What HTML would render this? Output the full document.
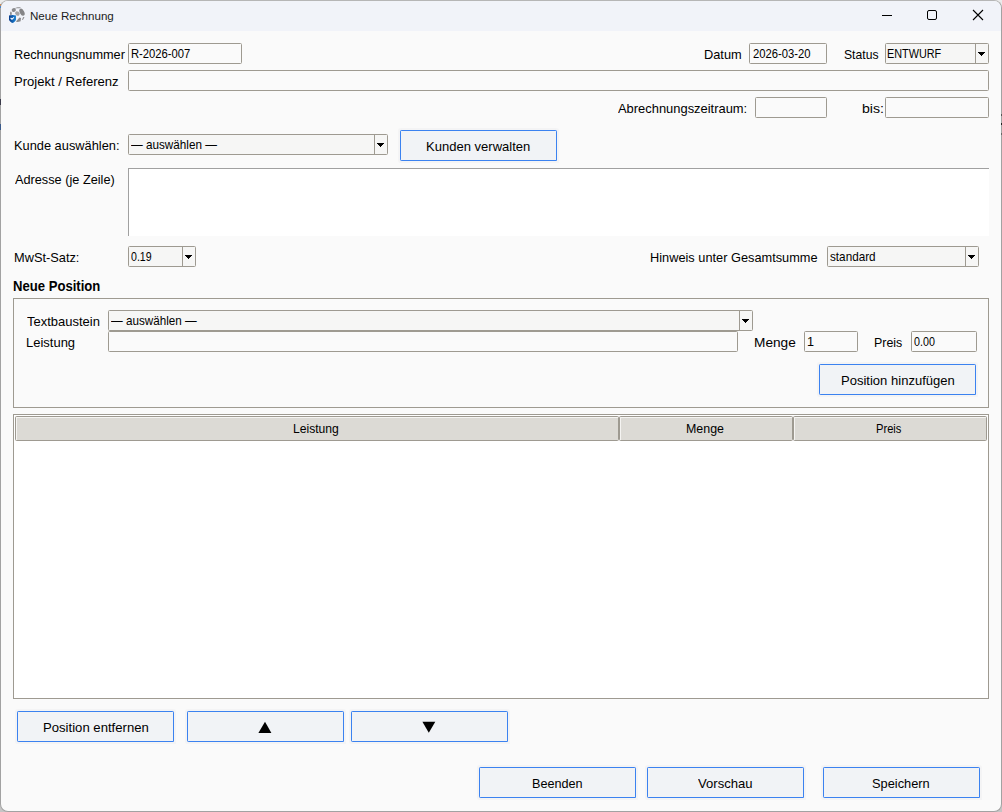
<!DOCTYPE html>
<html><head><meta charset="utf-8"><style>
html,body{margin:0;padding:0;width:1002px;height:812px;overflow:hidden;background:linear-gradient(#ebebeb 0,#ebebeb 50%,#c5c5c5 50%,#c5c5c5 100%);}
*{box-sizing:border-box}
.win{position:absolute;left:0;top:0;width:1002px;height:812px;border:1px solid #a2a2a2;border-top-color:#b6b6b6;border-radius:8px;background:#fafafa;overflow:hidden}
.tb{position:absolute;left:0;top:0;width:1000px;height:30px;background:#f1f3f9}
.win div,.win svg{position:absolute}
#root{position:absolute;left:-1px;top:-1px;width:1002px;height:812px}
#root>div,#root>svg{position:absolute}
.t{font-family:"Liberation Sans",sans-serif;white-space:nowrap;line-height:16px;margin-top:-12px;transform-origin:0 0}
.ent{border:1px solid #9e9a91;border-radius:1.5px;background:#fafafa}
.cmb{border:1px solid #9e9a91;border-radius:1.5px;background:#f6f6f5}
.cmb .dd{position:absolute;right:0;top:0;width:13px;height:100%;border-left:1px solid #9e9a91}
.cmb .dd svg{position:absolute;left:2px;top:8px}
.btn{border:1px solid #3b82f0;border-radius:1.2px 1.2px 0 1.2px;background:#f1f3f6;box-shadow:0 0 0 2px #f4f4f5}
.ta{border-top:1px solid #a0a0a0;border-left:1px solid #a0a0a0;background:#fff}
.lf{border:1px solid #9e9a91;border-radius:0}
.tv{border:1px solid #9e9a91;border-radius:0;background:#fff}
.th{border:1px solid #9e9a91;border-radius:1.5px;background:#dcdad5;box-shadow:inset 1px 1px 0 #f5f4f2}
.ico{position:absolute}
</style></head><body>
<div class="win"><div class="tb"></div>
<div id="root">
<div class="ent" style="left:128px;top:43px;width:114px;height:21px"></div>
<div class="ent" style="left:749px;top:43px;width:78px;height:21px"></div>
<div class="ent" style="left:128px;top:70px;width:861px;height:21px"></div>
<div class="ent" style="left:755px;top:97px;width:72px;height:21px"></div>
<div class="ent" style="left:885px;top:97px;width:104px;height:21px"></div>
<div class="ent" style="left:108px;top:331px;width:630px;height:21px"></div>
<div class="ent" style="left:804px;top:331px;width:54px;height:21px"></div>
<div class="ent" style="left:911px;top:331px;width:66px;height:21px"></div>
<div class="cmb" style="left:885px;top:43px;width:104px;height:21px"><div class="dd"><svg width="7" height="4" viewBox="0 0 7 4" shape-rendering="crispEdges"><rect x="0" y="0" width="7" height="1"/><rect x="1" y="1" width="5" height="1"/><rect x="2" y="2" width="3" height="1"/><rect x="3" y="3" width="1" height="1"/></svg></div></div>
<div class="cmb" style="left:128px;top:134px;width:260px;height:21px"><div class="dd"><svg width="7" height="4" viewBox="0 0 7 4" shape-rendering="crispEdges"><rect x="0" y="0" width="7" height="1"/><rect x="1" y="1" width="5" height="1"/><rect x="2" y="2" width="3" height="1"/><rect x="3" y="3" width="1" height="1"/></svg></div></div>
<div class="cmb" style="left:128px;top:246px;width:68px;height:21px"><div class="dd"><svg width="7" height="4" viewBox="0 0 7 4" shape-rendering="crispEdges"><rect x="0" y="0" width="7" height="1"/><rect x="1" y="1" width="5" height="1"/><rect x="2" y="2" width="3" height="1"/><rect x="3" y="3" width="1" height="1"/></svg></div></div>
<div class="cmb" style="left:827px;top:246px;width:152px;height:21px"><div class="dd"><svg width="7" height="4" viewBox="0 0 7 4" shape-rendering="crispEdges"><rect x="0" y="0" width="7" height="1"/><rect x="1" y="1" width="5" height="1"/><rect x="2" y="2" width="3" height="1"/><rect x="3" y="3" width="1" height="1"/></svg></div></div>
<div class="cmb" style="left:108px;top:310px;width:645px;height:21px"><div class="dd"><svg width="7" height="4" viewBox="0 0 7 4" shape-rendering="crispEdges"><rect x="0" y="0" width="7" height="1"/><rect x="1" y="1" width="5" height="1"/><rect x="2" y="2" width="3" height="1"/><rect x="3" y="3" width="1" height="1"/></svg></div></div>
<div class="btn" style="left:400px;top:130px;width:157px;height:31px"></div>
<div class="btn" style="left:819px;top:364px;width:157px;height:31px"></div>
<div class="btn" style="left:17px;top:711px;width:157px;height:31px"></div>
<div class="btn" style="left:187px;top:711px;width:157px;height:31px"></div>
<div class="btn" style="left:351px;top:711px;width:157px;height:31px"></div>
<div class="btn" style="left:479px;top:767px;width:157px;height:31px"></div>
<div class="btn" style="left:647px;top:767px;width:157px;height:31px"></div>
<div class="btn" style="left:823px;top:767px;width:157px;height:31px"></div>
<div class="ta" style="left:128px;top:168px;width:861px;height:68px"></div>
<div class="lf" style="left:13px;top:298px;width:976px;height:110px"></div>
<div class="tv" style="left:13px;top:414px;width:976px;height:285px"></div>
<div class="th" style="left:15px;top:416px;width:604px;height:25px"></div>
<div class="th" style="left:619px;top:416px;width:174px;height:25px"></div>
<div class="th" style="left:793px;top:416px;width:194px;height:25px"></div>
<svg class="ico" style="left:258px;top:721px" width="14" height="13" viewBox="0 0 14 13"><path d="M0.4 12 L7 0.7 L13.4 12 Z" fill="#000"/></svg>
<svg class="ico" style="left:422px;top:721px" width="14" height="13" viewBox="0 0 14 13"><path d="M0.4 0.8 L13.3 0.8 L6.8 11.8 Z" fill="#000"/></svg>
<div class="t" id="title" style="left:30.10px;top:19.80px;font-size:11.6px;font-weight:400;color:#1b1b1b;transform:scaleX(1.0001)">Neue Rechnung</div>
<div class="t" id="l_rn" style="left:14.10px;top:59.00px;font-size:12.6px;font-weight:400;color:#000;transform:scaleX(1.0092)">Rechnungsnummer</div>
<div class="t" id="v_rn" style="left:131.10px;top:58.00px;font-size:12.6px;font-weight:400;color:#000;transform:scaleX(0.8923)">R-2026-007</div>
<div class="t" id="l_dat" style="left:704.16px;top:59.00px;font-size:12.6px;font-weight:400;color:#000;transform:scaleX(1.0169)">Datum</div>
<div class="t" id="v_dat" style="left:752.50px;top:58.00px;font-size:12.6px;font-weight:400;color:#000;transform:scaleX(0.8938)">2026-03-20</div>
<div class="t" id="l_st" style="left:843.60px;top:59.00px;font-size:12.6px;font-weight:400;color:#000;transform:scaleX(0.9660)">Status</div>
<div class="t" id="v_st" style="left:887.14px;top:58.00px;font-size:12.6px;font-weight:400;color:#000;transform:scaleX(0.8614)">ENTWURF</div>
<div class="t" id="l_pr" style="left:14.10px;top:86.00px;font-size:12.6px;font-weight:400;color:#000;transform:scaleX(1.0384)">Projekt / Referenz</div>
<div class="t" id="l_ab" style="left:618.02px;top:112.70px;font-size:12.6px;font-weight:400;color:#000;transform:scaleX(1.0254)">Abrechnungszeitraum:</div>
<div class="t" id="l_bis" style="left:862.12px;top:112.70px;font-size:12.6px;font-weight:400;color:#000;transform:scaleX(1.1235)">bis:</div>
<div class="t" id="l_ku" style="left:14.10px;top:149.50px;font-size:12.6px;font-weight:400;color:#000;transform:scaleX(1.0177)">Kunde auswählen:</div>
<div class="t" id="v_ku" style="left:130.52px;top:148.70px;font-size:12.6px;font-weight:400;color:#000;transform:scaleX(0.9300)">— auswählen —</div>
<div class="t" id="b_kv" style="left:426.10px;top:150.80px;font-size:12.6px;font-weight:400;color:#000;transform:scaleX(1.0344)">Kunden verwalten</div>
<div class="t" id="l_ad" style="left:15.00px;top:184.30px;font-size:12.6px;font-weight:400;color:#000;transform:scaleX(1.0102)">Adresse (je Zeile)</div>
<div class="t" id="l_mw" style="left:14.10px;top:262.00px;font-size:12.6px;font-weight:400;color:#000;transform:scaleX(1.0159)">MwSt-Satz:</div>
<div class="t" id="v_mw" style="left:131.02px;top:261.20px;font-size:12.6px;font-weight:400;color:#000;transform:scaleX(0.8400)">0.19</div>
<div class="t" id="l_hw" style="left:650.16px;top:262.00px;font-size:12.6px;font-weight:400;color:#000;transform:scaleX(1.0146)">Hinweis unter Gesamtsumme</div>
<div class="t" id="v_hw" style="left:830.00px;top:261.20px;font-size:12.6px;font-weight:400;color:#000;transform:scaleX(0.9308)">standard</div>
<div class="t" id="l_np" style="left:13.08px;top:290.10px;font-size:14.3px;font-weight:700;color:#000;transform:scaleX(0.9161)">Neue Position</div>
<div class="t" id="l_tb" style="left:27.02px;top:326.00px;font-size:12.6px;font-weight:400;color:#000;transform:scaleX(1.0311)">Textbaustein</div>
<div class="t" id="v_tb" style="left:111.02px;top:324.50px;font-size:12.6px;font-weight:400;color:#000;transform:scaleX(0.9269)">— auswählen —</div>
<div class="t" id="l_le" style="left:26.12px;top:347.00px;font-size:12.6px;font-weight:400;color:#000;transform:scaleX(1.0306)">Leistung</div>
<div class="t" id="l_me" style="left:754.12px;top:347.00px;font-size:12.6px;font-weight:400;color:#000;transform:scaleX(1.0846)">Menge</div>
<div class="t" id="v_me" style="left:807.10px;top:346.00px;font-size:12.6px;font-weight:400;color:#000;transform:scaleX(1.0000)">1</div>
<div class="t" id="l_pe" style="left:874.14px;top:346.60px;font-size:12.6px;font-weight:400;color:#000;transform:scaleX(0.9862)">Preis</div>
<div class="t" id="v_pe" style="left:914.46px;top:346.00px;font-size:12.6px;font-weight:400;color:#000;transform:scaleX(0.8507)">0.00</div>
<div class="t" id="b_ph" style="left:840.60px;top:384.90px;font-size:12.6px;font-weight:400;color:#000;transform:scaleX(1.0349)">Position hinzufügen</div>
<div class="t" id="h_le" style="left:293.14px;top:432.70px;font-size:12.6px;font-weight:400;color:#000;transform:scaleX(0.9625)">Leistung</div>
<div class="t" id="h_me" style="left:686.12px;top:432.70px;font-size:12.6px;font-weight:400;color:#000;transform:scaleX(0.9850)">Menge</div>
<div class="t" id="h_pr" style="left:876.16px;top:432.70px;font-size:12.6px;font-weight:400;color:#000;transform:scaleX(0.8862)">Preis</div>
<div class="t" id="b_pe" style="left:42.58px;top:731.60px;font-size:12.6px;font-weight:400;color:#000;transform:scaleX(1.0420)">Position entfernen</div>
<div class="t" id="b_be" style="left:531.60px;top:788.00px;font-size:12.6px;font-weight:400;color:#000;transform:scaleX(1.0046)">Beenden</div>
<div class="t" id="b_vo" style="left:698.48px;top:788.00px;font-size:12.6px;font-weight:400;color:#000;transform:scaleX(1.0386)">Vorschau</div>
<div class="t" id="b_sp" style="left:872.12px;top:788.00px;font-size:12.6px;font-weight:400;color:#000;transform:scaleX(1.0180)">Speichern</div>
<svg style="position:absolute;left:8px;top:5px" width="18" height="19" viewBox="8 5 18 19">
<defs><linearGradient id="sg" x1="0" y1="0" x2="1" y2="0"><stop offset="0" stop-color="#0a3c8c"/><stop offset="1" stop-color="#1b86d6"/></linearGradient></defs>
<path d="M15.3 8.1 C16.5 7.1, 19 6.9, 20.8 7.6 L20.2 8.3 C18.8 8, 16.8 8.1, 15.3 8.5 Z" fill="#8c8c8e"/>
<ellipse cx="13.8" cy="10" rx="2.1" ry="1.9" transform="rotate(-25 13.8 10)" fill="#8a8a8c"/>
<ellipse cx="17.4" cy="13.5" rx="2.4" ry="2" transform="rotate(35 17.4 13.5)" fill="#a2a2a4"/>
<ellipse cx="22" cy="12.2" rx="2.2" ry="3.8" transform="rotate(-28 22 12.2)" fill="#858587"/>
<ellipse cx="10.9" cy="13.6" rx="0.9" ry="2" fill="#8e8e90"/>
<path d="M15.8 21.8 L19.5 17.6 L21 18 L20.6 21.2 C19 22, 17 22.1, 15.8 21.8 Z" fill="#8a8a8c"/>
<path d="M22 19.8 L23.2 17.1 L24.5 17.3 L22.8 20 Z" fill="#8e8e90"/>
<path d="M9 15.6 C10.5 15.2, 12.3 15, 12.5 15 C13.5 15, 15 15.2, 16 15.6 L16 19.2 C16 21, 14 22.3, 12.5 23 C11 22.3, 9 21, 9 19.2 Z" fill="url(#sg)"/>
<path d="M10.6 17.8 L12 19.3 L13.9 17.4" stroke="#fff" stroke-width="1.1" fill="none"/>
</svg>
<svg style="position:absolute;left:882px;top:10px" width="11" height="11" viewBox="0 0 11 11"><path d="M0 5.5 H10" stroke="#000" stroke-width="1"/></svg>
<svg style="position:absolute;left:927px;top:10px" width="11" height="11" viewBox="0 0 11 11"><rect x="0.5" y="0.5" width="9" height="9" rx="1.5" fill="none" stroke="#000" stroke-width="1"/></svg>
<svg style="position:absolute;left:972px;top:9px" width="12" height="12" viewBox="0 0 12 12"><path d="M1 1 L11 11 M11 1 L1 11" stroke="#000" stroke-width="1.1"/></svg>
</div></div>
<div class="mk" style="position:absolute;left:0;top:4px;width:1px;height:2px;background:#c98a5a"></div><div class="mk" style="position:absolute;left:0;top:6px;width:1px;height:2px;background:#4a86c8"></div><div class="mk" style="position:absolute;left:0;top:99px;width:1px;height:6px;background:#3a3a4a"></div><div class="mk" style="position:absolute;left:0;top:124px;width:1px;height:6px;background:#3a5a8a"></div><div class="mk" style="position:absolute;left:1001px;top:114px;width:1px;height:2px;background:#555"></div><div class="mk" style="position:absolute;left:1001px;top:123px;width:1px;height:2px;background:#222"></div><div class="mk" style="position:absolute;left:1001px;top:133px;width:1px;height:2px;background:#666"></div>
</body></html>
